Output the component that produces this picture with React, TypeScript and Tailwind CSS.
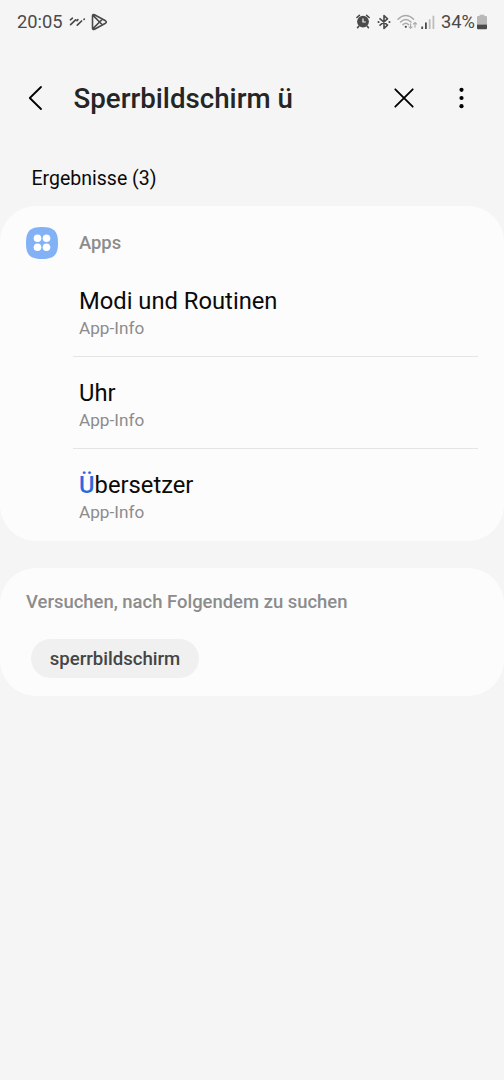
import type { ReactNode } from 'react';

type Result = {
  id: string;
  title: ReactNode;
  subtitle: string;
};

const results: Result[] = [
  { id: 'modes', title: 'Modi und Routinen', subtitle: 'App-Info' },
  { id: 'clock', title: 'Uhr', subtitle: 'App-Info' },
  {
    id: 'translator',
    title: (
      <>
        <span className="font-medium text-[#2a6ade]">Ü</span>bersetzer
      </>
    ),
    subtitle: 'App-Info',
  },
];

function StatusBar() {
  return (
    <div className="flex h-11 items-center justify-between pl-[17px] pr-[17px] text-[#4a4a4a]">
      <div className="flex items-center">
        <span className="w-[46px] text-[18.3px] leading-none">20:05</span>
        {/* Activity marks */}
        <svg className="ml-[5px]" width="18" height="14" viewBox="0 0 18 14" fill="none" stroke="currentColor" strokeWidth="1.7" strokeLinecap="round">
          <path d="M2.4 4.8 4.4 3.2M2.6 9.6 7.6 4.8M9 5.6 9.9 4.7M9.3 10.2 13.6 6M16 4.4 16.3 4.1" />
        </svg>
        {/* Play Store */}
        <svg className="ml-[5px]" width="18" height="18" viewBox="0 0 18 18" fill="none" stroke="currentColor" strokeWidth="1.6" strokeLinejoin="round">
          <path d="M1.5 3Q1.5 .9 3.5 1.8L14.5 7.8Q16.2 9 14.5 10.2L3.5 16.2Q1.5 17.1 1.5 15ZM2 2.4 11.3 11.8M2 15.6 11.3 6.2" />
        </svg>
      </div>

      <div className="flex items-center">
        {/* Alarm */}
        <svg width="14" height="15" viewBox="0 0 14 15" fill="none">
          <circle cx="7" cy="7.6" r="5.9" fill="currentColor" />
          <path d="M.9 3.5 3.4 1.3M13.1 3.5 10.6 1.3M2.8 12.3 1.6 13.6M11.2 12.3 12.4 13.6" stroke="currentColor" strokeWidth="1.6" strokeLinecap="round" />
          <path d="M7 4.4V8H9.8" stroke="#f5f5f5" strokeWidth="1.2" />
        </svg>
        {/* Bluetooth */}
        <svg className="ml-[7px]" width="14" height="16" viewBox="0 0 14 16" fill="none" stroke="currentColor" strokeWidth="1.6" strokeLinejoin="round">
          <path d="M2.5 4.3 10.5 11.2 7 14.5V1.5L10.5 4.8 2.5 11.7" />
          <path d="M1.5 8H1.6M12.4 8H12.5" strokeWidth="2" strokeLinecap="round" />
        </svg>
        {/* Wi-Fi with traffic arrows */}
        <svg className="ml-[6px]" width="21" height="16" viewBox="0 0 21 16" fill="none" stroke="#aaaaaa" strokeWidth="1.5" strokeLinecap="round">
          <path d="M1 5.2Q8.8-2.2 16.6 5.2M3.6 8Q8.8 3 14 8M6 10.6Q8.8 8 11.6 10.6" />
          <circle cx="8.8" cy="12.8" r="1.1" fill="#4a4a4a" stroke="none" />
          <path d="M13.6 9.8V14M12.1 12.9 13.6 14.3 15.1 12.9M18 13.2V8.6M16.5 10 18 8.5 19.5 10" strokeWidth="1.1" />
        </svg>
        {/* Signal */}
        <svg className="ml-[3px]" width="14" height="14" viewBox="0 0 14 14">
          <path d="M.3 11.4h1.8V14H.3zM4 7.6h1.8V14H4z" fill="currentColor" />
          <path d="M7.8 4.2h1.8V14H7.8zM11.5.8h1.8V14h-1.8z" fill="#bdbdbd" />
        </svg>
        <span className="ml-[6px] w-[33px] whitespace-nowrap text-[18.3px] leading-none">34%</span>
        {/* Battery */}
        <svg className="ml-[3px]" width="10" height="16" viewBox="0 0 10 16">
          <path d="M2.6.8h4.8V2H9a1 1 0 0 1 1 1v7.5H0V3a1 1 0 0 1 1-1h1.6z" fill="#b8b8b8" />
          <path d="M0 10.5h10v3.7a1 1 0 0 1-1 1H1a1 1 0 0 1-1-1z" fill="currentColor" />
        </svg>
      </div>
    </div>
  );
}

function SearchHeader() {
  return (
    <header className="flex h-[108px] items-center pl-7 pr-[37px] text-black">
      <button aria-label="Zurück">
        <svg width="16" height="26" viewBox="0 0 16 26" fill="none" stroke="currentColor" strokeWidth="1.8" strokeLinecap="round" strokeLinejoin="round">
          <path d="M13 2 1.8 13 13 24" />
        </svg>
      </button>
      <h1 className="ml-[29.5px] flex-1 whitespace-nowrap pt-[2px] text-[27.7px] font-medium leading-9 text-[#252525]">
        Sperrbildschirm ü
      </h1>
      <button aria-label="Löschen">
        <svg width="20" height="20" viewBox="0 0 20 20" fill="none" stroke="currentColor" strokeWidth="1.8" strokeLinecap="round">
          <path d="M1.3 1.3 18.7 18.7M18.7 1.3 1.3 18.7" />
        </svg>
      </button>
      <button aria-label="Mehr" className="ml-[43px]">
        <svg width="10" height="22" viewBox="0 0 10 22" fill="currentColor">
          <circle cx="4.5" cy="2.8" r="2.1" />
          <circle cx="4.5" cy="11" r="2.1" />
          <circle cx="4.5" cy="19.2" r="2.1" />
        </svg>
      </button>
    </header>
  );
}

export default function App() {
  return (
    <div className="min-h-screen bg-[#f5f5f5] font-[Roboto,sans-serif]">
      <StatusBar />
      <SearchHeader />

      <main>
        <h2 className="flex h-[54px] items-center pl-[31.5px] text-[19.5px] text-[#0a0a0a]">
          Ergebnisse (3)
        </h2>

        {/* Results */}
        <section className="rounded-[36px] bg-[#fcfcfc] pb-px">
          <div className="flex h-[59px] items-start pl-[26px] pt-[21px]">
            <svg width="32" height="32" viewBox="0 0 32 32">
              <path d="M16 0C28 0 32 4 32 16S28 32 16 32 0 28 0 16 4 0 16 0Z" fill="#82b1f5" />
              <g fill="#fff">
                <circle cx="11.5" cy="11.3" r="3.8" />
                <circle cx="20.5" cy="11.3" r="3.8" />
                <circle cx="11.5" cy="20.3" r="3.8" />
                <circle cx="20.5" cy="20.3" r="3.8" />
              </g>
            </svg>
            <span className="ml-[21px] text-[18.4px] font-medium leading-8 text-[#8c8c8c]">Apps</span>
          </div>
          <ul className="ml-[73px] mr-[26px]">
            {results.map((result) => (
              <li key={result.id} className="border-b border-[#e5e5e5] pb-[17px] pl-[6px] pt-5 last:border-b-0">
                <div className="text-[23.75px] leading-8 text-[#0a0a0a]">{result.title}</div>
                <div className="text-[17.2px] leading-[22px] text-[#8c8c8c]">{result.subtitle}</div>
              </li>
            ))}
          </ul>
        </section>

        {/* Suggestions */}
        <section className="mt-[27px] h-32 rounded-[36px] bg-[#fcfcfc] pl-[26px] pt-[22px]">
          <h3 className="text-[18.45px] font-medium leading-6 text-[#8c8c8c]">
            Versuchen, nach Folgendem zu suchen
          </h3>
          <button className="ml-[5px] mt-[25px] h-[39px] w-[168px] rounded-full bg-[#f0f0f0] pt-[2px] text-[18.6px] font-medium text-[#454545]">
            sperrbildschirm
          </button>
        </section>
      </main>
    </div>
  );
}
